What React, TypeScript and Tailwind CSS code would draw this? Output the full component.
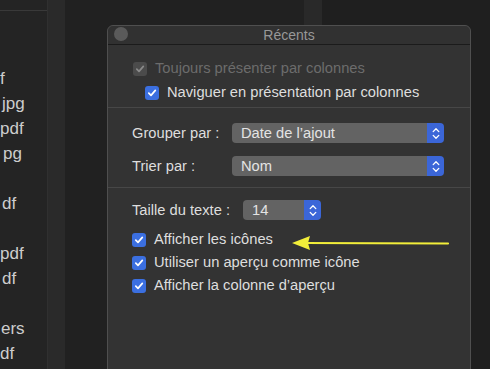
import type { ReactNode } from 'react'

const files = [
  { name: 'f', pad: 'pl-0' },
  { name: 'jpg', pad: 'pl-[2px]' },
  { name: 'pdf', pad: 'pl-0' },
  { name: 'pg', pad: 'pl-[3px]' },
  { name: '', pad: '' },
  { name: 'df', pad: 'pl-[2px]' },
  { name: '', pad: '' },
  { name: 'pdf', pad: 'pl-0' },
  { name: 'df', pad: 'pl-[2px]' },
  { name: '', pad: '' },
  { name: 'ers', pad: 'pl-[1px]' },
  { name: 'df', pad: 'pl-0' },
]

function Check({ disabled }: { disabled?: boolean }) {
  return (
    <span
      className={
        disabled
          ? 'w-[14px] h-[14px] rounded-[3px] bg-[#4b4b4b] flex items-center justify-center shrink-0'
          : 'w-[14px] h-[14px] rounded-[3px] bg-[#3b6fe0] flex items-center justify-center shrink-0'
      }
    >
      <svg width="10" height="10" viewBox="0 0 10 10">
        <path
          d="M1.8 5.2 L4 7.4 L8.3 2.4"
          fill="none"
          stroke={disabled ? '#8a8a8a' : '#ffffff'}
          strokeWidth="1.7"
          strokeLinecap="round"
          strokeLinejoin="round"
        />
      </svg>
    </span>
  )
}

function CheckRow({ label, disabled, className }: { label: string; disabled?: boolean; className: string }) {
  return (
    <div className={`flex items-center gap-2 ${className}`}>
      <Check disabled={disabled} />
      <span className={disabled ? 'text-[#6c6c6c]' : 'text-[#dedede]'}>{label}</span>
    </div>
  )
}

function Select({ value, width }: { value: string; width: string }) {
  return (
    <div className={`h-[20px] ${width} flex rounded-[4px] overflow-hidden`}>
      <div className="flex-1 bg-[#636363] text-[#e4e4e4] pl-[9px] flex items-center">{value}</div>
      <div className="w-[17px] bg-[#3b66d8] flex items-center justify-center">
        <svg width="8" height="13" viewBox="0 0 8 13">
          <path d="M1.2 4.6 L4 1.8 L6.8 4.6 M1.2 8.4 L4 11.2 L6.8 8.4" fill="none" stroke="#fff" strokeWidth="1.3" strokeLinecap="round" strokeLinejoin="round" />
        </svg>
      </div>
    </div>
  )
}

function Row({ label, labelWidth, children }: { label: string; labelWidth: string; children: ReactNode }) {
  return (
    <div className="flex items-center h-[20px]">
      <span className={`${labelWidth} text-[#dedede]`}>{label}</span>
      {children}
    </div>
  )
}

export default function App() {
  return (
    <div className="relative w-[490px] h-[369px] overflow-hidden flex bg-[#212121] font-['Liberation_Sans',Arial,sans-serif]">
      {/* file list pane, scrolled so only the name endings show */}
      <div className="w-[47px] h-full bg-[#242424] overflow-hidden flex flex-col">
        <div className="h-[11px] border-b border-[#393939] shrink-0" />
        <div className="pt-[55px] flex flex-col">
          {files.map((f, i) => (
            <div key={i} className={`h-[25px] leading-[25px] whitespace-nowrap text-[17px] text-[#cdcdcd] ${f.pad}`}>
              {f.name}
            </div>
          ))}
        </div>
      </div>
      <div className="w-[18px] h-full bg-[#2a2a2a] border-l border-[#303030]" />
      <div className="w-[239px] h-full" />
      <div className="w-[18px] h-full bg-[#292929]" />
      <div className="flex-1 h-full bg-[#1f1f1f]" />

      {/* preferences window */}
      <div className="absolute left-[107px] top-[25px] w-[364px] h-[360px] bg-[#333333] border border-[#4f4f4f] rounded-t-[6px] text-[14.7px]">
        <div className="relative h-[19px] bg-[#313131] border-b border-[#1b1b1b] rounded-t-[6px] flex items-center justify-center">
          <span className="absolute left-[6px] top-[1px] w-[14px] h-[14px] rounded-full bg-[#5a5a5a]" />
          <span className="text-[14px] text-[#989898]">Récents</span>
        </div>

        <div className="pt-[12px] pb-[2px] border-b border-[#474747]">
          <CheckRow className="h-[23px] pl-[25px]" disabled label="Toujours présenter par colonnes" />
          <CheckRow className="h-[25px] pl-[37px]" label="Naviguer en présentation par colonnes" />
        </div>

        <div className="pt-[15px] pb-[11px] pl-[24px] flex flex-col gap-[13px] border-b border-[#474747]">
          <Row label="Grouper par :" labelWidth="w-[100px]">
            <Select value="Date de l’ajout" width="w-[212px]" />
          </Row>
          <Row label="Trier par :" labelWidth="w-[100px]">
            <Select value="Nom" width="w-[212px]" />
          </Row>
        </div>

        <div className="pt-[12px] pl-[24px]">
          <Row label="Taille du texte :" labelWidth="w-[111px]">
            <Select value="14" width="w-[78px]" />
          </Row>
          <div className="pt-[8px]">
            <CheckRow className="h-[23px]" label="Afficher les icônes" />
            <CheckRow className="h-[23px]" label="Utiliser un aperçu comme icône" />
            <CheckRow className="h-[23px]" label="Afficher la colonne d’aperçu" />
          </div>
        </div>
      </div>

      {/* annotation arrow */}
      <svg className="absolute left-[288px] top-[232px]" width="164" height="22" viewBox="0 0 164 22">
        <path d="M160 11.5 L16 11" stroke="#f2ee3a" strokeWidth="2.2" strokeLinecap="round" />
        <path d="M4 11 L22 4 L20 11 L22 18 Z" fill="#f2ee3a" />
      </svg>
    </div>
  )
}
